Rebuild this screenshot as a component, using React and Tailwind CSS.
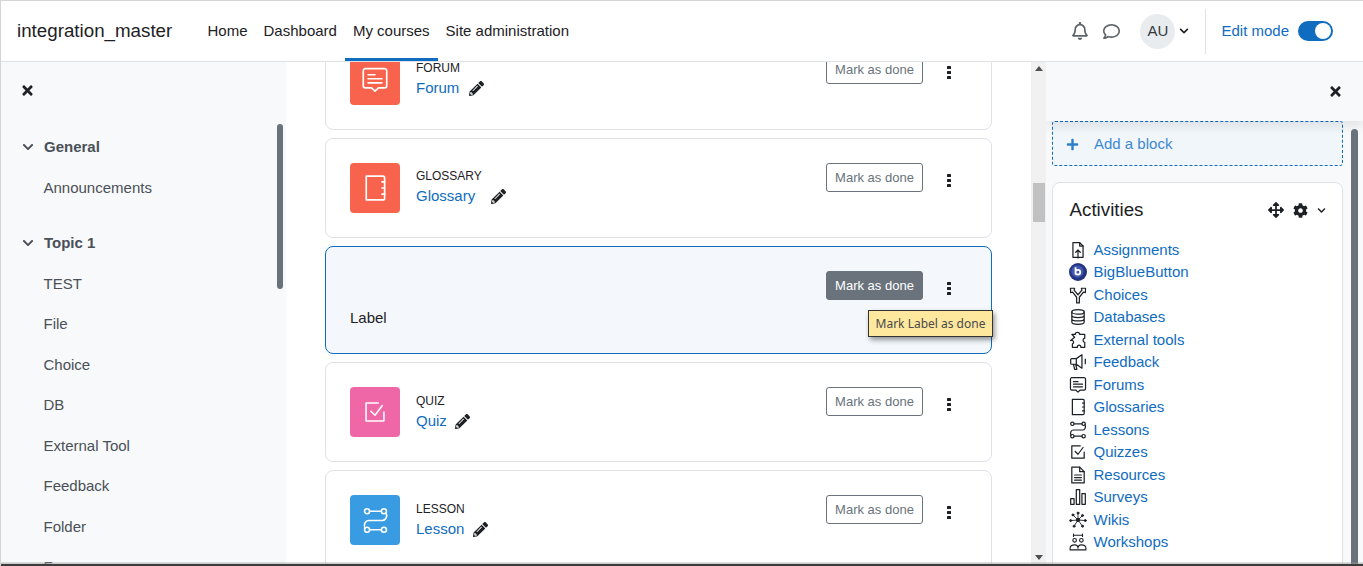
import { FaRegBell, FaRegComment, FaPencilAlt, FaTimes, FaCog, FaArrowsAlt, FaPlus, FaChevronDown } from "react-icons/fa";

const sans = "font-['Liberation_Sans',Arial,sans-serif]";

function Ico({ children, className = "w-[18px] h-[18px]", sw = 1.1 }) {
  return (
    <svg viewBox="0 0 16 16" fill="none" stroke="currentColor" strokeWidth={sw} strokeLinecap="round" strokeLinejoin="round" className={className}>
      {children}
    </svg>
  );
}

const forumPaths = (
  <>
    <path d="M2.5 1.5h11a1.2 1.2 0 0 1 1.2 1.2v8.6a1.2 1.2 0 0 1-1.2 1.2H10l-2 1.8-2-1.8H2.500a1.200 1.200 0 0 1-1.200-1.200V2.700a1.200 1.200 0 0 1 1.200-1.200z" />
    <path d="M4 5h4M4 7.300h8M4 9.600h8" />
  </>
);
const glossaryPaths = (
  <>
    <path d="M3 1.200h9.500a1 1 0 0 1 1 1v11.600a1 1 0 0 1-1 1H3z" />
    <path d="M12 4.500h1.500M12 8h1.500M12 11.500h1.500" />
  </>
);
const quizPaths = (
  <>
    <path d="M13.500 8v5.500h-11v-11H10" />
    <path d="M5.500 7.500 8 10l4.500-6" />
  </>
);
const lessonPaths = (
  <>
    <circle cx="3" cy="2.500" r="1.500" />
    <circle cx="13" cy="2.500" r="1.500" />
    <circle cx="3" cy="13.500" r="1.500" />
    <circle cx="13" cy="13.500" r="1.500" />
    <path d="M4.500 2.500h7M4.500 13.500h7M14.300 3.300c.9 2.700-.3 4.700-2.300 4.700H4c-2 0-3.200 2-2.300 4.700" />
  </>
);

const activities = [
  ["Assignments", <Ico><path d="M3.500 1.500h6l3 3v10h-9z" /><path d="M9.500 1.500v3h3M8 15V8M6 10l2-2 2 2" /></Ico>],
  ["BigBlueButton", <svg viewBox="0 0 16 16" className="w-[18px] h-[18px]"><circle cx="8" cy="8" r="8" fill="#22337f" /><circle cx="7.500" cy="7.500" r="5.500" fill="#4257ad" /><path d="M5.800 3.800v6.400M5.800 8.200a2.100 2.100 0 1 0 4.200 0 2.100 2.100 0 1 0-4.200 0" fill="none" stroke="#fff" strokeWidth="1.600" /></svg>],
  ["Choices", <Ico><path d="M6.800 15V10L3.200 5.500 1.500 6 1.300 2 5 2 4.500 3.700 8 7.800 11.500 3.700 11 2 14.700 2 14.500 6 12.800 5.500 9.200 10V15z" /></Ico>],
  ["Databases", <Ico><ellipse cx="8" cy="3.500" rx="5.500" ry="2" /><path d="M2.500 3.500v9c0 1.100 2.500 2 5.500 2s5.500-.9 5.500-2v-9M2.500 6.500c0 1.100 2.500 2 5.500 2s5.500-.9 5.500-2M2.500 9.500c0 1.100 2.500 2 5.500 2s5.500-.9 5.500-2" /></Ico>],
  ["External tools", <Ico><path d="M5.500 3c0-2.500 4-2.500 4 0h4.500v3.500c-2 0-2 3.500 0 3.500v4.500h-3.500c.5-2.500-3.500-2.500-3 0H3v-3c2-.5 1-4-1.500-3L5 5.500 2.500 3z" /></Ico>],
  ["Feedback", <Ico><path d="M11.500 1.500v12L6.500 10H2.500a1 1 0 0 1-1-1V6a1 1 0 0 1 1-1h4zM4 10l1 4.500h2L6 10.300M14.500 5.500v4M6.500 5v5" /></Ico>],
  ["Forums", <Ico>{forumPaths}</Ico>],
  ["Glossaries", <Ico>{glossaryPaths}</Ico>],
  ["Lessons", <Ico>{lessonPaths}</Ico>],
  ["Quizzes", <Ico>{quizPaths}</Ico>],
  ["Resources", <Ico><path d="M2.500 1h7l4 4v10h-11z" /><path d="M9.500 1v4h4M5 8h6M5 10.300h6M5 12.600h6" /></Ico>],
  ["Surveys", <Ico><path d="M1.500 9.500h3v5h-3zM6.500 1.500h3v13h-3zM11.500 5h3v9.500h-3z" /></Ico>],
  ["Wikis", <Ico sw={0.8}><path d="M8 8 3.500 3.500M8 8l4-4M8 8l6.500.5M8 8l4 5.500M8 8l-3.500 5.500M8 8 1.500 8.500M8 8V2" /><circle cx="8" cy="8" r="1.500" fill="currentColor" /><circle cx="3.500" cy="3.500" r=".9" fill="currentColor" /><circle cx="12" cy="4" r=".9" fill="currentColor" /><circle cx="14.500" cy="8.500" r=".9" fill="currentColor" /><circle cx="12" cy="13.500" r=".9" fill="currentColor" /><circle cx="4.500" cy="13.500" r=".9" fill="currentColor" /><circle cx="1.500" cy="8.500" r=".9" fill="currentColor" /><circle cx="8" cy="1.800" r=".9" fill="currentColor" /></Ico>],
  ["Workshops", <Ico sw={1}><circle cx="5" cy="6.500" r="1.600" /><circle cx="11" cy="6.500" r="1.600" /><path d="M1 15v-1.500c0-2 1.500-3 4-3s3 1 3 3c0-2 .5-3 3-3s4 1 4 3V15zM4 2h8M4 1v2M12 1v2" /></Ico>],
];

const sections = [
  { title: "General", head: "pb-[2px]", items: ["Announcements"] },
  { title: "Topic 1", head: "", items: ["TEST", "File", "Choice", "DB", "External Tool", "Feedback", "Folder", "Forum"] },
];

function ModCard({ type, name, color, icon, iconSize, pencilGap, textTop }) {
  return (
    <div className="h-[100px] shrink-0 flex items-start pl-6 pr-6 pt-6 bg-white border border-[#dee2e6] rounded-lg">
      <div className={`w-[50px] h-[50px] rounded flex items-center justify-center text-white ${color}`}>
        <Ico className={iconSize} sw={0.95}>{icon}</Ico>
      </div>
      <div className={`ml-4 flex-1 ${textTop}`}>
        <div className="text-[12px] leading-[18px] text-[#1d2125]">{type}</div>
        <div className="flex items-center text-[15px] leading-[22px] text-[#0f6cbf]">
          {name}
          <FaPencilAlt className={`w-[15px] h-[15px] mt-[1px] text-[#1d2125] ${pencilGap}`} />
        </div>
      </div>
      <MarkButton />
      <Dots />
    </div>
  );
}

function MarkButton({ active }) {
  return (
    <div className={`w-[97px] h-[29px] rounded-[3px] flex items-center justify-center text-[13px] border ${active ? "bg-[#6a737b] border-[#6a737b] text-white" : "bg-white border-[#6a737b] text-[#6a737b]"}`}>
      Mark as done
    </div>
  );
}

function Dots() {
  return (
    <div className="w-[36px] h-[29px] ml-2 mt-[3px] flex items-center justify-center text-[#1d2125]">
      <svg viewBox="0 0 4 13" fill="currentColor" className="w-[4px] h-[13px]">
        <rect x="0" y="0" width="4" height="3" rx="0.6" />
        <rect x="0" y="5" width="4" height="3" rx="0.6" />
        <rect x="0" y="10" width="4" height="3" rx="0.6" />
      </svg>
    </div>
  );
}

export default function App() {
  return (
    <div className={`relative h-[566px] w-[1363px] overflow-hidden flex flex-col bg-white border-t border-l border-[#d4d4d4] ${sans}`}>
      {/* top nav */}
      <header className="h-[60px] shrink-0 flex items-center pl-4 bg-white border-b border-[#dee2e6] box-content">
        <div className="text-[18.75px] text-[#1d2125] w-[182.500px]">integration_master</div>
        <nav className="flex h-full text-[15px] text-[#1d2125]">
          {["Home", "Dashboard", "My courses", "Site administration"].map((t) => (
            <div key={t} className={`h-full flex items-center px-2 border-b-[3px] pt-[3px] ${t === "My courses" ? "border-[#0f6cbf]" : "border-transparent"}`}>{t}</div>
          ))}
        </nav>
        <div className="ml-auto flex items-center h-full">
          <FaRegBell className="w-[18px] h-[18px] text-[#5f6468]" />
          <FaRegComment className="w-[17px] h-[17px] ml-[14px] text-[#5f6468]" />
          <div className="ml-[20px] w-[35px] h-[35px] rounded-full bg-[#e9ecef] flex items-center justify-center text-[15px] text-[#343a40]">AU</div>
          <FaChevronDown className="ml-[4px] w-[10px] h-[10px] text-[#1d2125]" />
          <div className="ml-4 w-px h-[45px] bg-[#dee2e6]" />
          <div className="ml-[15px] text-[15px] text-[#0f6cbf]">Edit mode</div>
          <div className="ml-[9px] mr-[30px] w-[35px] h-[20px] rounded-full bg-[#0f6cbf] flex items-center justify-end pr-[2px]">
            <div className="w-4 h-4 rounded-full bg-white" />
          </div>
        </div>
      </header>

      <div className="flex-1 flex min-h-0">
        {/* course index */}
        <aside className="relative w-[285px] shrink-0 bg-[#f8f9fa] overflow-hidden">
          <div className="h-[56px] pl-[19px] flex items-center">
            <FaTimes className="w-[15px] h-[15px] text-[#1d2125]" />
          </div>
          <div className="pt-[9.500px] text-[15px] text-[#495057]">
            {sections.map((s) => (
              <div key={s.title} className="mb-[14.500px]">
                <div className={`h-[40.500px] flex items-center pl-[21px] font-bold ${s.head}`}>
                  <FaChevronDown className="w-[12px] h-[12px] mr-[10px]" />
                  {s.title}
                </div>
                {s.items.map((i) => (
                  <div key={i} className="h-[40.500px] flex items-center pl-[42.500px]">{i}</div>
                ))}
              </div>
            ))}
          </div>
          <div className="absolute left-[276px] top-[62px] w-[6px] h-[165px] rounded bg-[#6a737b]" />
        </aside>

        {/* course content */}
        <main className="flex-1 min-w-0 overflow-hidden pl-[39px] pr-[39px] bg-white">
          <div className="flex flex-col gap-2 -mt-[32px]">
            <ModCard type="FORUM" name="Forum" color="bg-[#f7634d]" icon={forumPaths} iconSize="w-[28px] h-[28px]" pencilGap="ml-[10px]" textTop="mt-[4px]" />
            <ModCard type="GLOSSARY" name="Glossary" color="bg-[#f7634d]" icon={glossaryPaths} iconSize="w-[28px] h-[28px]" pencilGap="ml-[16px]" textTop="mt-[4px]" />
            <div className="relative h-[108px] shrink-0 flex items-start pl-6 pr-6 pt-6 bg-[#f4f8fc] border border-[#0f6cbf] rounded-lg">
              <div className="flex-1 pt-[36px] text-[15px] leading-[22px] text-[#1d2125]">Label</div>
              <MarkButton active />
              <Dots />
              <div className="absolute left-[542px] top-[63px] w-[125px] h-[27px] flex items-center justify-center bg-[#fde89e] border border-[#333] text-[12px] text-[#4a4a4a] shadow-[2px_3px_5px_rgba(0,0,0,0.4)] font-['Noto_Sans',sans-serif]">
                Mark Label as done
              </div>
            </div>
            <ModCard type="QUIZ" name="Quiz" color="bg-[#ef67a7]" icon={quizPaths} iconSize="w-[26px] h-[26px]" pencilGap="ml-[8px]" textTop="mt-[5px]" />
            <ModCard type="LESSON" name="Lesson" color="bg-[#399be2]" icon={lessonPaths} iconSize="w-[27px] h-[27px]" pencilGap="ml-[9px]" textTop="mt-[5px]" />
          </div>
        </main>

        {/* page scrollbar */}
        <div className="w-[15px] shrink-0 bg-[#f1f1f1] flex flex-col items-center pl-[1px]">
          <div className="mt-[4px] w-0 h-0 border-x-[4px] border-x-transparent border-b-[5px] border-b-[#505050]" />
          <div className="mt-[112px] w-[12px] h-[39px] bg-[#c1c1c1]" />
          <div className="mt-auto mb-[6px] w-0 h-0 border-x-[4px] border-x-transparent border-t-[5px] border-t-[#505050]" />
        </div>

        {/* block drawer */}
        <aside className="relative w-[317px] shrink-0 bg-[#f8f9fa] overflow-hidden">
          <div className="h-[59px] bg-[#f8f9fa] flex items-center justify-end pr-[20px] shadow-[0_6px_10px_rgba(0,0,0,0.08)] relative">
            <FaTimes className="w-[15px] h-[15px] text-[#1d2125]" />
          </div>
          <div className="ml-[6px] w-[291px]">
            <div className="h-[45px] flex items-center pl-[13px] pt-[1px] border border-dashed border-[#0f6cbf] rounded-[3px] bg-[#f1f6fb] text-[15px] text-[#3d89cf]">
              <FaPlus className="w-[13px] h-[13px] text-[#2e7fc9]" />
              <span className="ml-[15px]">Add a block</span>
            </div>
            <div className="mt-4 h-[420px] bg-white border border-[#dee2e6] rounded-lg pl-[16.500px] pr-4 pt-[15px]">
              <div className="flex items-center h-[24px]">
                <div className="text-[18.750px] text-[#1d2125]">Activities</div>
                <FaArrowsAlt className="ml-auto w-[16px] h-[16px] text-[#1d2125]" />
                <FaCog className="ml-[9px] w-[15px] h-[15px] text-[#1d2125]" />
                <FaChevronDown className="ml-[9px] w-[9px] h-[9px] text-[#1d2125]" />
              </div>
              <ul className="mt-[16.500px]">
                {activities.map(([name, icon]) => (
                  <li key={name} className="h-[22.500px] flex items-center text-[15px] text-[#0f6cbf]">
                    <span className="w-[18px] h-[18px] text-[#1d2125] mr-[7px] -ml-[1px] shrink-0">{icon}</span>
                    {name}
                  </li>
                ))}
              </ul>
            </div>
          </div>
          <div className="absolute left-[305px] top-[67px] bottom-0 w-[7px] rounded-t bg-[#6a737b]" />
        </aside>
      </div>

      {/* window edge */}
      <div className="absolute left-0 right-0 bottom-0 h-[4px] bg-gradient-to-b from-[#8080802e] from-0% via-[#a0a0a0a0] via-50% to-[#3c3c3c] to-50%" />
    </div>
  );
}
